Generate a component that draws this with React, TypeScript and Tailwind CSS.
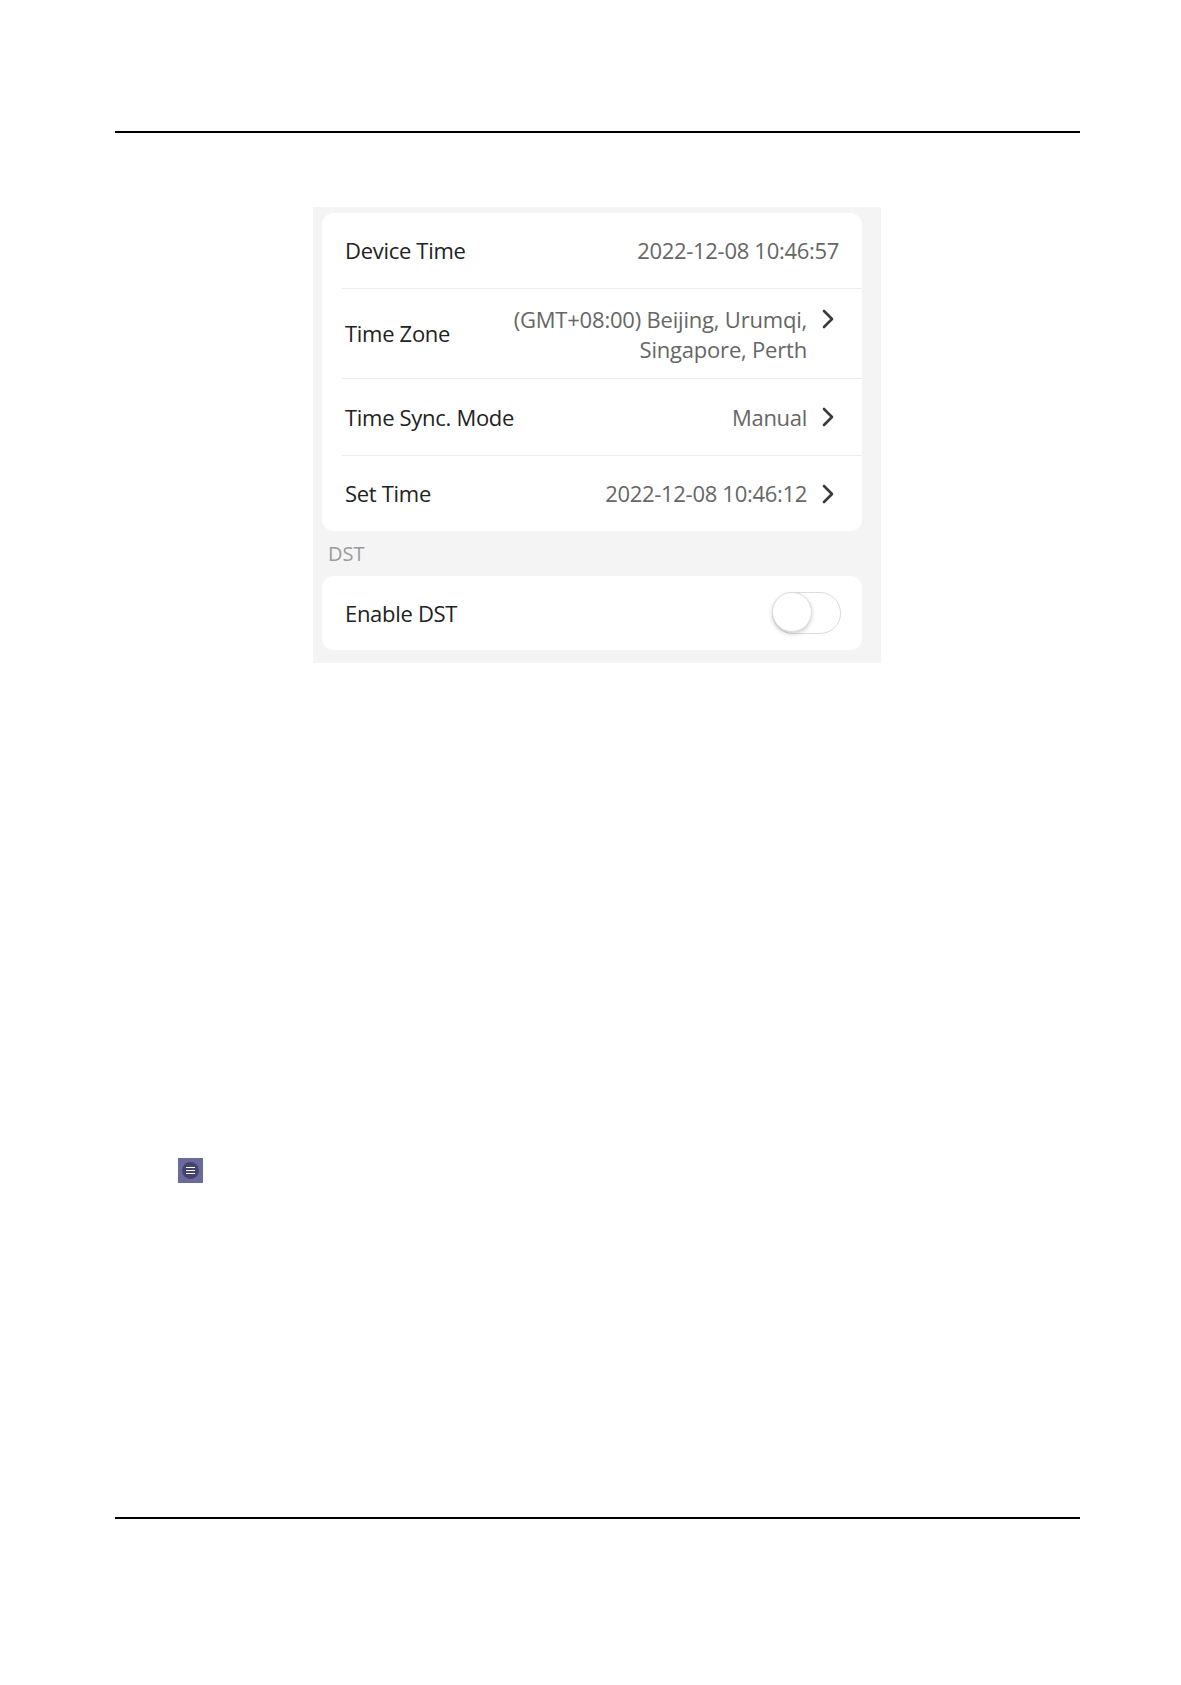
const font = { fontFamily: '"Open Sans", "Noto Sans", sans-serif' }

function Row({
  label,
  children,
  className = '',
}: {
  label: string
  children: React.ReactNode
  className?: string
}) {
  return (
    <div className={`flex items-center justify-between pl-[23px] ${className}`}>
      <span className="text-[22px] text-[#222222] tracking-[-0.3px]">{label}</span>
      {children}
    </div>
  )
}

function Chevron() {
  return (
    <svg
      viewBox="0 0 14 22"
      className="ml-[14px] h-[22px] w-[14px] shrink-0"
      fill="none"
      stroke="#3a3a3a"
      strokeWidth={2.6}
      strokeLinecap="round"
      strokeLinejoin="round"
    >
      <polyline points="3,3 11,11 3,19" />
    </svg>
  )
}

function Divider() {
  return <div className="ml-[20px] h-px bg-[#ececec]" />
}

export default function App() {
  return (
    <div className="min-h-[1685px] bg-white pt-[131px]" style={font}>
      <div className="ml-[115px] h-[2px] w-[965px] bg-black" />

      {/* panel */}
      <div className="ml-[313px] mt-[74px] w-[568px] bg-[#f4f4f4] pb-[13px] pl-[9px] pr-[19px] pt-[6px]">
        <div className="rounded-[12px] bg-white">
          <Row label="Device Time" className="h-[75px] pr-[23px]">
            <span className="text-[22px] tracking-[-0.3px] text-[#666666]">2022-12-08 10:46:57</span>
          </Row>
          <Divider />
          <Row label="Time Zone" className="h-[89px] pr-[27px]">
            <div className="flex items-start">
              <span className="text-right text-[22px] leading-[30px] tracking-[-0.2px] text-[#666666]">
                (GMT+08:00) Beijing, Urumqi,
                <br />
                Singapore, Perth
              </span>
              <span className="mt-[4px]">
                <Chevron />
              </span>
            </div>
          </Row>
          <Divider />
          <Row label="Time Sync. Mode" className="h-[76px] pr-[27px]">
            <div className="flex items-center">
              <span className="text-[22px] tracking-[-0.3px] text-[#666666]">Manual</span>
              <Chevron />
            </div>
          </Row>
          <Divider />
          <Row label="Set Time" className="h-[75px] pr-[27px]">
            <div className="flex items-center">
              <span className="text-[22px] tracking-[-0.3px] text-[#666666]">2022-12-08 10:46:12</span>
              <Chevron />
            </div>
          </Row>
        </div>

        <div className="flex h-[45px] items-center pl-[6px] text-[20px] text-[#9a9a9a]">DST</div>

        <div className="rounded-[12px] bg-white">
          <Row label="Enable DST" className="h-[74px] pr-[21px]">
            <div className="relative h-[42px] w-[69px] rounded-full border-[1.5px] border-[#dcdcdc] bg-white">
              <div className="absolute left-[-1px] top-[-1px] h-[40px] w-[40px] rounded-full border border-[#dedede] bg-white shadow-[0_2px_4px_rgba(0,0,0,0.18)]" />
            </div>
          </Row>
        </div>
      </div>

      {/* note icon */}
      <div className="ml-[178px] mt-[495px] flex h-[25px] w-[25px] items-center justify-center bg-[#6b6b9b]">
        <div className="flex h-[17px] w-[17px] flex-col items-center justify-center gap-[2px] rounded-full bg-[#44446f]">
          <div className="h-px w-[9px] bg-white" />
          <div className="h-px w-[9px] bg-white" />
          <div className="h-px w-[9px] bg-white" />
        </div>
      </div>

      <div className="ml-[115px] mt-[334px] h-[2px] w-[965px] bg-black" />
    </div>
  )
}
